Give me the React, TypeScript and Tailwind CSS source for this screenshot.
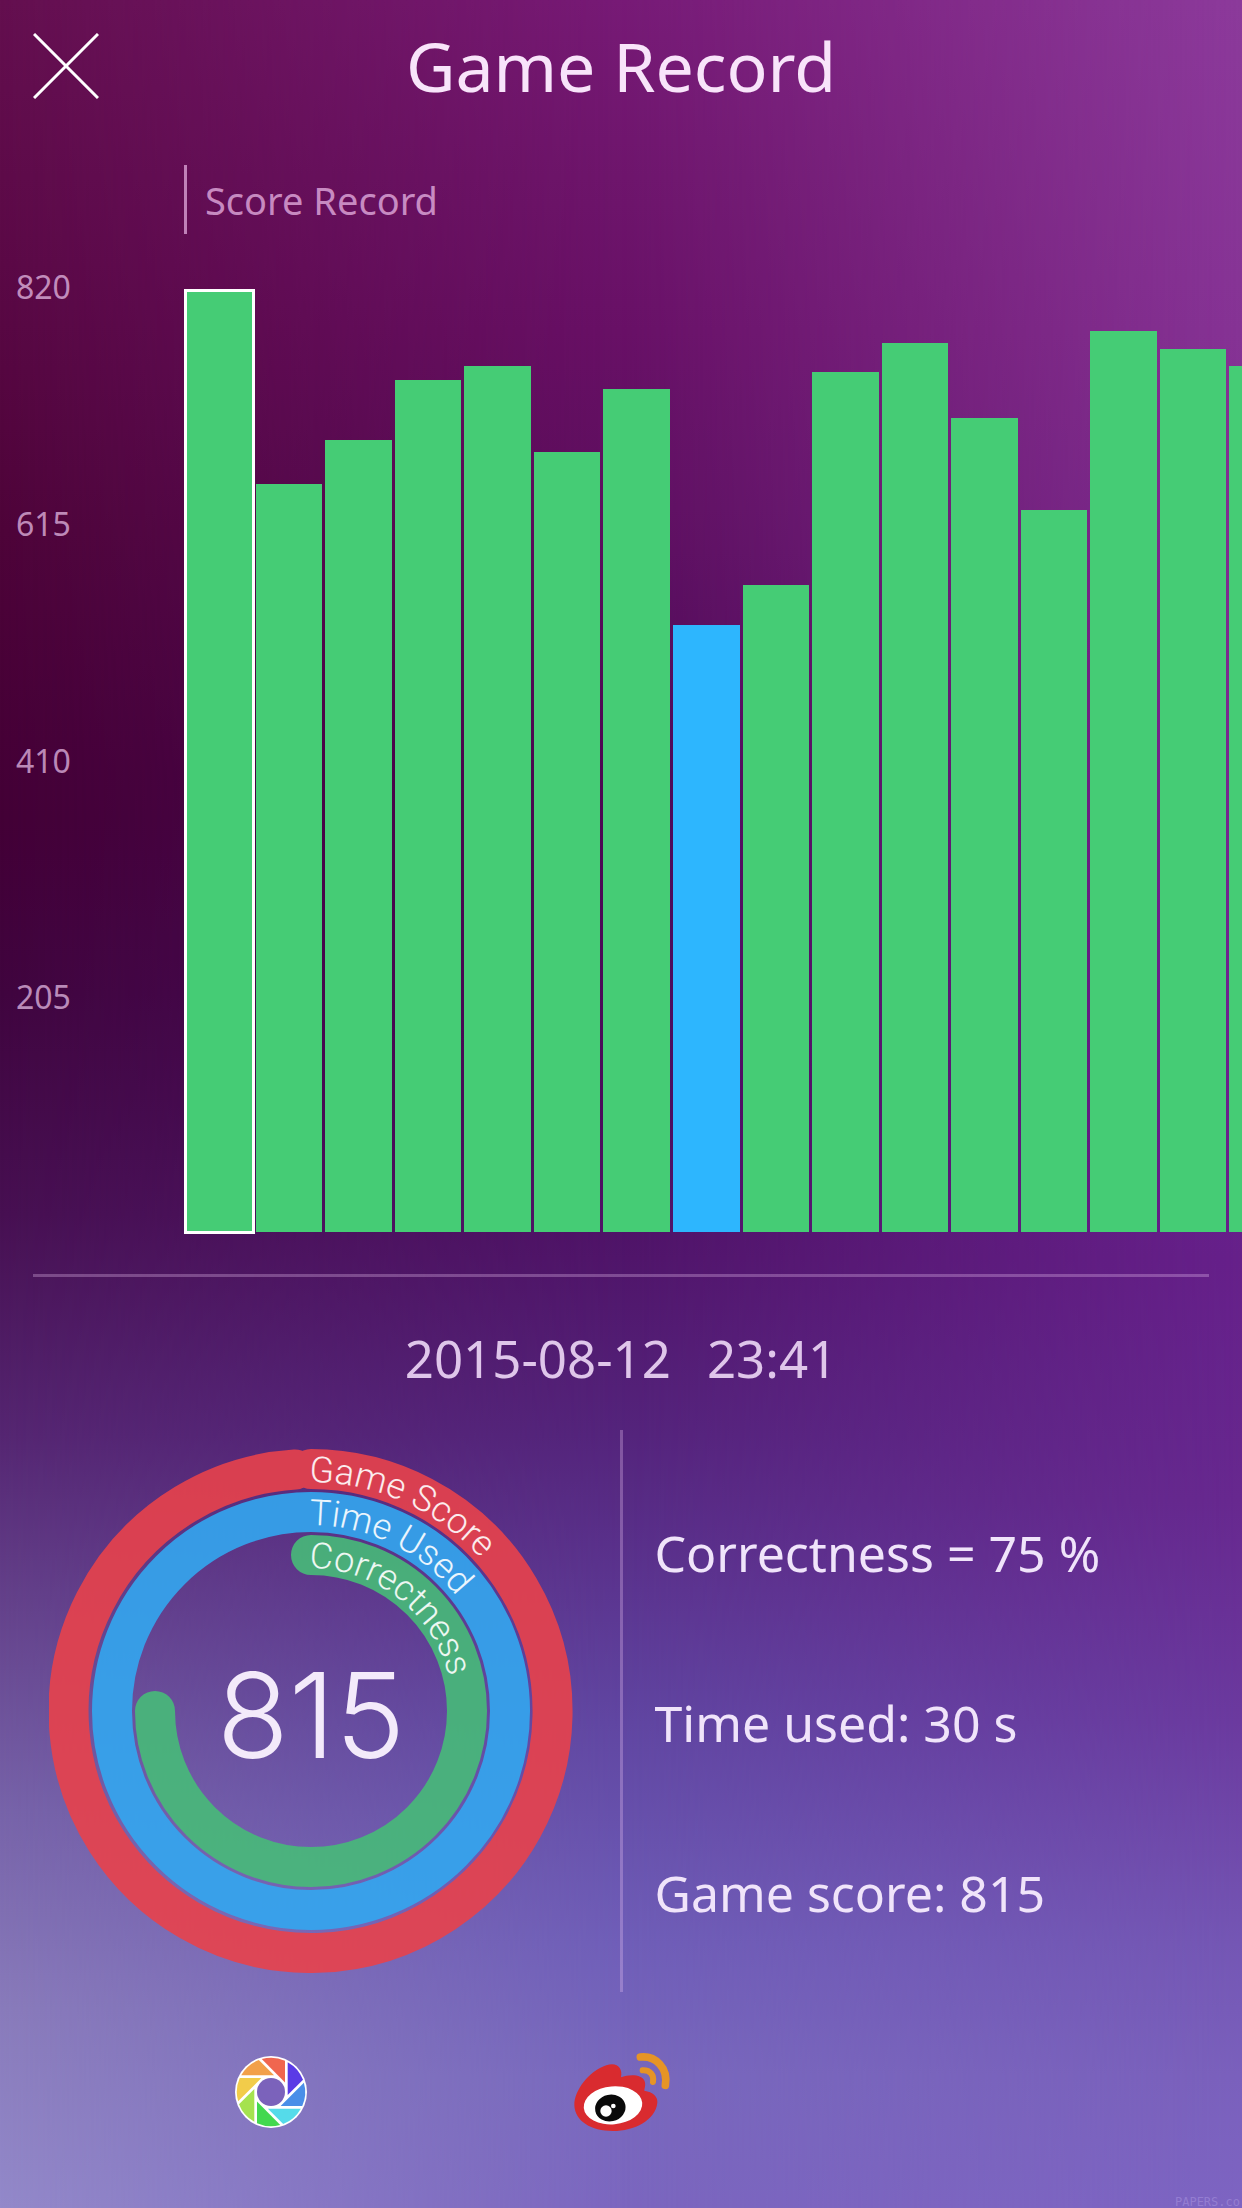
import React, { useState } from 'react';

const AXIS_MAX = 820;
const axisLabels = [820, 615, 410, 205];
const scores = [815, 648, 686, 738, 750, 675, 730, 526, 560, 745, 770, 705, 625, 780, 765, 750];
const LOWEST = Math.min(...scores);

function Backdrop() {
  return (
    <div aria-hidden="true" className="absolute inset-0 -z-10">
      <div className="absolute inset-0 bg-[linear-gradient(180deg,#640f4f_0%,#5b0946_12%,#4e0439_24%,#430036_37%,#40053f_45%,#471052_55%,#552672_65%,#65438c_73%,#7763a9_82%,#897bbb_91%,#9389ca_100%)]" />
      <div className="absolute inset-0 bg-[linear-gradient(180deg,#771a76_0%,#6e156c_8%,#681066_15%,#5e0f60_23%,#4c0854_35%,#4a0c5c_50%,#50156a_57%,#54247c_65%,#5b3590_72%,#6046a2_78%,#6f5eb8_88%,#7868bd_94%,#7b66bf_100%)] [mask-image:linear-gradient(90deg,transparent_0%,black_50%)]" />
      <div className="absolute inset-0 bg-[linear-gradient(180deg,#8c3a9b_0%,#863395_15%,#7d2b90_30%,#6f2390_45%,#66208a_57%,#67288f_68%,#6b3a9f_78%,#7456b4_88%,#7a60bc_94%,#7d64c2_100%)] [mask-image:linear-gradient(90deg,transparent_50%,black_100%)]" />
    </div>
  );
}

function ScoreChart() {
  const [selected, setSelected] = useState(0);
  return (
    <section aria-label="Score Record" className="mt-[33px] flex h-[967px]">
      <div className="flex w-[184px] shrink-0 flex-col pb-5 pl-4 text-[32px] leading-10 text-[#f0c8f0]/70">
        {axisLabels.map((label) => (
          <div key={label} className="flex-1">{label}</div>
        ))}
      </div>
      <div className="min-w-0 flex-1 overflow-hidden pt-[18px] pb-0.5 pl-0.5">
        <div className="flex h-full w-[1110px] items-end gap-[3px]">
          {scores.map((score, i) => (
            <button
              key={i}
              type="button"
              aria-label={`Score ${score}`}
              aria-pressed={i === selected}
              onClick={() => setSelected(i)}
              className={`flex-1 ${score === LOWEST ? 'bg-[#2db6fe]' : 'bg-[#45cc75]'} ${
                i === selected ? 'outline-[3px] -outline-offset-1 outline-white' : 'outline-none'
              }`}
              style={{ height: `${(score / AXIS_MAX) * 100}%` }}
            />
          ))}
        </div>
      </div>
    </section>
  );
}

function Rings() {
  return (
    <svg viewBox="-262 -262 524 524" className="w-[524px]" role="img" aria-label="Game score 815">
      <defs>
        <path id="outer-label" d="M-2 -229 A229 229 0 0 1 0 229" />
        <path id="middle-label" d="M-2 -186 A186 186 0 0 1 0 186" />
        <path id="inner-label" d="M-2 -143 A143 143 0 0 1 0 143" />
      </defs>
      <g fill="none" strokeWidth="40" strokeLinecap="round" opacity="0.9">
        <path d="M0 -242 A242 242 0 1 1 -16 -241.5" stroke="#e8424c" />
        <circle r="199" stroke="#33a7f0" />
        <path d="M0 -156 A156 156 0 1 1 -156 0" stroke="#47bb79" />
      </g>
      <g className="fill-white/90 font-['Roboto','Liberation_Sans',sans-serif] text-[36px] font-light">
        <text><textPath href="#outer-label">Game Score</textPath></text>
        <text><textPath href="#middle-label">Time Used</textPath></text>
        <text><textPath href="#inner-label">Correctness</textPath></text>
      </g>
      <text
        x="0"
        y="47"
        textAnchor="middle"
        className="fill-[#f3eafa] font-['Inter','Liberation_Sans',sans-serif] text-[118px] font-light"
      >
        815
      </text>
    </svg>
  );
}

const blades = ['#5a3be6', '#4a8fe8', '#55dbea', '#43d84f', '#a5e24f', '#f2cc4a', '#f2a04a', '#f0664f'];

function ApertureIcon() {
  return (
    <svg viewBox="-37 -37 74 74" className="size-[74px]" aria-hidden="true">
      <circle r="36" fill="#fff" />
      {blades.map((color, i) => (
        <path
          key={color}
          transform={`rotate(${i * 45})`}
          d="M16.7 -29.8 A34.2 34.2 0 0 1 32 -12.2 L16.7 3.1 Z"
          fill={color}
        />
      ))}
      <circle r="15.5" fill="#fff" />
      <circle r="14" fill="#7b62bb" />
    </svg>
  );
}

function WeiboIcon() {
  return (
    <svg viewBox="35 30 300 250" className="w-[100px]" aria-hidden="true">
      <path
        d="M42 196 C42 150 86 94 138 76 C170 65 188 84 182 112 C206 102 246 102 253 124 C257 136 252 146 252 152 C278 156 293 170 291 188 C286 240 222 273 158 273 C92 273 44 244 42 196 Z"
        fill="#d92b2f"
      />
      <ellipse cx="158" cy="196" rx="88" ry="57" fill="#fff" transform="rotate(-5 158 196)" />
      <ellipse cx="150" cy="204" rx="46" ry="40" fill="#0a0a0a" transform="rotate(-12 150 204)" />
      <circle cx="137" cy="213" r="17" fill="#fff" />
      <circle cx="159" cy="198" r="7" fill="#fff" />
      <g fill="none" stroke="#e69426" strokeLinecap="round">
        <path d="M240 51 C286 46 324 84 315 136" strokeWidth="23" />
        <path d="M247 91 C270 90 282 106 278 126" strokeWidth="18" />
      </g>
    </svg>
  );
}

const details = ['Correctness = 75 %', 'Time used: 30 s', 'Game score: 815'];

export default function App() {
  return (
    <main className="relative isolate min-h-screen overflow-hidden font-['Noto_Sans','Open_Sans',sans-serif] text-[#f8e4fa]">
      <Backdrop />
      <header className="grid h-[132px] grid-cols-[66px_1fr_66px] items-center px-[33px]">
        <button type="button" aria-label="Close" className="size-[66px]">
          <svg viewBox="0 0 66 66" className="size-full" aria-hidden="true">
            <path d="M1 1 L65 65 M65 1 L1 65" stroke="#fff" strokeWidth="3" />
          </svg>
        </button>
        <h1 className="text-center text-[68px] leading-none">Game Record</h1>
      </header>

      <h2 className="mt-[33px] ml-[184px] flex h-[69px] items-center border-l-[3px] border-[#e8b4e4]/70 pl-[18px] text-[38px] leading-none text-[#e8b4e4]/75">
        Score Record
      </h2>

      <ScoreChart />

      <hr className="mx-[33px] mt-10 border-t-[3px] border-[#f0c8f4]/30" />

      <p className="flex h-[153px] items-center justify-center gap-9 pt-2.5 text-[51px] leading-none text-[#dfc6ea]">
        <span>2015-08-12</span>
        <span>23:41</span>
      </p>

      <section className="grid h-[562px] grid-cols-[1fr_3px_1fr]">
        <div className="flex items-center justify-center pl-0.5">
          <Rings />
        </div>
        <div className="bg-[#f0c8f4]/30" />
        <ul className="flex flex-col justify-center pt-6 pl-8 text-[50px] leading-[170px] text-[#f0e4fa]">
          {details.map((line) => (
            <li key={line} className="whitespace-nowrap">{line}</li>
          ))}
        </ul>
      </section>

      <footer className="flex items-center gap-[264px] pt-[58px] pb-7 pl-[234px]">
        <button type="button" aria-label="Share to Moments"><ApertureIcon /></button>
        <button type="button" aria-label="Share to Weibo"><WeiboIcon /></button>
      </footer>

      <small className="absolute right-0.5 bottom-0 font-['DejaVu_Sans_Mono',monospace] text-[12px] leading-none text-[#a58fdc]/60">
        PAPERS.co
      </small>
    </main>
  );
}
